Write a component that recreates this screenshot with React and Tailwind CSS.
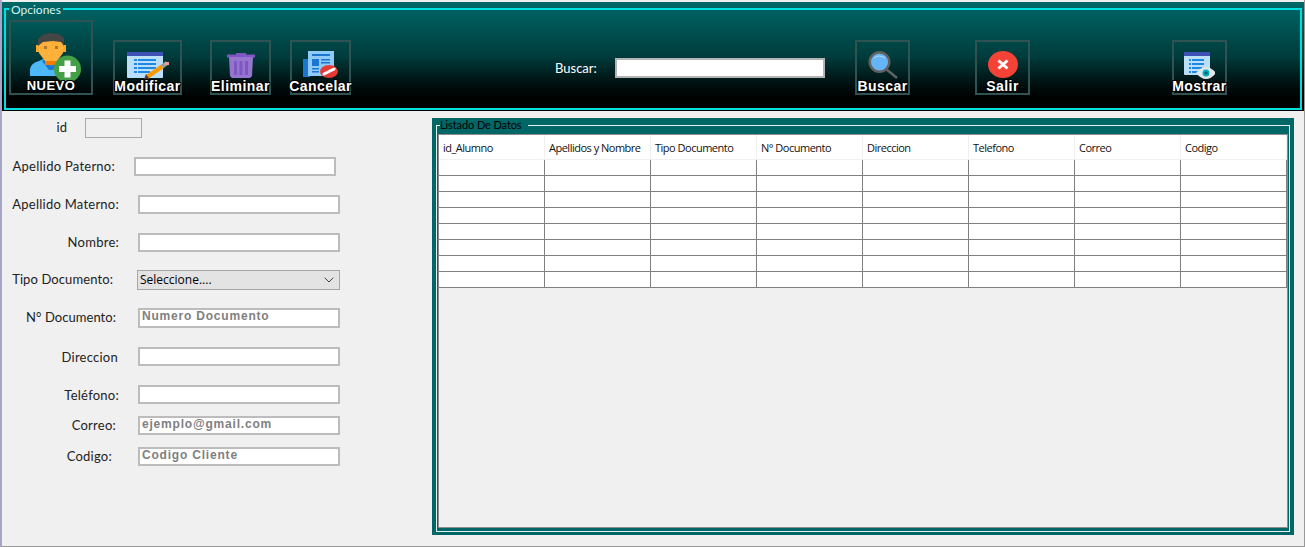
import { ChevronDown } from 'lucide-react';

const LABEL_FONT = 'font-["Lato",sans-serif]';
const BOLD_FONT = 'font-["Liberation_Sans",Arial,sans-serif]';

const columns = ['id_Alumno', 'Apellidos y Nombre', 'Tipo Documento', 'N° Documento', 'Direccion', 'Telefono', 'Correo', 'Codigo'];
const rows = [0, 1, 2, 3, 4, 5, 6, 7];

const fields = [
  { label: 'Apellido Paterno:', row: 'mt-[19px] h-[19px]', lw: 'w-[113px] tracking-[0.25px]', ml: 'ml-[19px]' },
  { label: 'Apellido Materno:', row: 'mt-[19px] h-[19px]', lw: 'w-[117px] tracking-[0.25px]', ml: 'ml-[19px]' },
  { label: 'Nombre:', row: 'mt-[19px] h-[19px]', lw: 'w-[117px] tracking-[0.25px]', ml: 'ml-[19px]' },
  { label: 'Tipo Documento:', row: 'mt-[18px] h-[20px]', lw: 'w-[111px] tracking-[0.1px]', ml: 'ml-[24px]', combo: true },
  { label: 'N° Documento:', row: 'mt-[18px] h-[20px]', lw: 'w-[114px] tracking-[0.05px]', ml: 'ml-[22px]', value: 'Numero Documento' },
  { label: 'Direccion', row: 'mt-[19px] h-[19px]', lw: 'w-[116px] pt-[3px] tracking-[0.25px]', ml: 'ml-[20px]' },
  { label: 'Teléfono:', row: 'mt-[19px] h-[19px]', lw: 'w-[117px] pt-[3px] tracking-[0.25px]', ml: 'ml-[19px]' },
  { label: 'Correo:', row: 'mt-[12px] h-[19px]', lw: 'w-[114px] tracking-[0.25px]', ml: 'ml-[22px]', value: 'ejemplo@gmail.com' },
  { label: 'Codigo:', row: 'mt-[12px] h-[19px]', lw: 'w-[110px] tracking-[0.25px]', ml: 'ml-[26px]', value: 'Codigo Cliente' },
];

//// Toolbar icons ////
function NuevoIcon() {
  return (
    <svg width="53" height="48" viewBox="0 0 53 48" className="mt-[11px] ml-[9px] -mb-[2px] shrink-0">
      <path d="M1 43 V36 Q2 30 10 28 L16 25 H28 L36 29 V43 Z" fill="#4db8f8" />
      <path d="M13 28 L16 25 L22 33 L28 25 L32 28 L24 37 H20 Z" fill="#1976d2" />
      <rect x="16" y="21" width="12" height="11" fill="#f57c00" />
      <rect x="7" y="12" width="4" height="7" fill="#ffa726" />
      <rect x="33" y="12" width="4" height="7" fill="#ffa726" />
      <path d="M10 6 H34 V20 L28 28 H16 L10 20 Z" fill="#ffb13b" />
      <path d="M9 13 V6 L13 2 L20 0 L30 1 L35 5 V13 L32 9 L24 8 L14 9 Z" fill="#454545" />
      <rect x="15" y="13" width="3" height="3" fill="#b5742a" />
      <rect x="26" y="13" width="3" height="3" fill="#b5742a" />
      <circle cx="38.5" cy="36" r="13.5" fill="#43a047" />
      <rect x="30" y="33" width="17" height="6" fill="#fff" />
      <rect x="35.5" y="27.5" width="6" height="17" fill="#fff" />
    </svg>
  );
}

function ModificarIcon() {
  return (
    <svg width="42" height="28" viewBox="0 0 42 28" className="mt-[9px] shrink-0">
      <rect x="0" y="1" width="36" height="26" rx="1" fill="#bbdefb" />
      <rect x="0" y="1" width="36" height="4" fill="#3f51b5" />
      <g fill="#1e88e5">
        <rect x="7" y="8" width="3" height="2" /><rect x="11" y="8" width="18" height="2" />
        <rect x="7" y="12" width="3" height="2" /><rect x="11" y="12" width="18" height="2" />
        <rect x="7" y="16" width="3" height="2" /><rect x="11" y="16" width="18" height="2" />
        <rect x="7" y="20" width="3" height="2" /><rect x="11" y="20" width="12" height="2" />
      </g>
      <path d="M20 26 L36 15" stroke="#ff9800" strokeWidth="4.5" />
      <path d="M35 15.5 L40 12" stroke="#9e9e9e" strokeWidth="4" />
      <rect x="38" y="11" width="4" height="3" fill="#ef9a9a" />
      <path d="M17 28 L19 23 L22 27 Z" fill="#5d4037" />
    </svg>
  );
}

function EliminarIcon() {
  return (
    <svg width="28" height="28" viewBox="0 0 28 28" className="mt-[9px] shrink-0">
      <rect x="9" y="2" width="10" height="2" fill="#7e57c2" />
      <rect x="0" y="3.5" width="28" height="3" fill="#7e57c2" />
      <path d="M2 6 H26 L25 25 L23 27 H5 L3 25 Z" fill="#9575cd" />
      <g fill="#7e57c2">
        <rect x="7" y="10" width="3" height="14" />
        <rect x="12.5" y="10" width="3" height="14" />
        <rect x="18" y="10" width="3" height="14" />
      </g>
    </svg>
  );
}

function CancelarIcon() {
  return (
    <svg width="35" height="28" viewBox="0 0 35 28" className="mt-[9px] shrink-0">
      <rect x="0" y="8" width="7" height="18" fill="#1976d2" />
      <rect x="5" y="0" width="26" height="25" fill="#90caf9" />
      <g fill="#1976d2">
        <rect x="9" y="3" width="18" height="2" />
        <rect x="9" y="8" width="7" height="7" />
        <rect x="18" y="8" width="9" height="1.5" /><rect x="18" y="11" width="9" height="1.5" />
        <rect x="9" y="17" width="7" height="1.5" /><rect x="9" y="20" width="7" height="1.5" />
      </g>
      <ellipse cx="26" cy="20.5" rx="9" ry="6.5" fill="#e53935" />
      <path d="M21 23 L31 18" stroke="#fff" strokeWidth="3" strokeLinecap="round" />
    </svg>
  );
}

function BuscarIcon() {
  return (
    <svg width="30" height="28" viewBox="0 0 30 28" className="mt-[9px] shrink-0">
      <path d="M18 18 L29 27" stroke="#5f6368" strokeWidth="2.5" />
      <circle cx="11.5" cy="11" r="9.8" fill="#64b5f6" stroke="#616161" strokeWidth="2.5" />
      <path d="M6 7 Q11 3 17 7" stroke="#bbdefb" strokeWidth="1" fill="none" />
    </svg>
  );
}

function SalirIcon() {
  return (
    <svg width="30" height="28" viewBox="0 0 30 28" className="mt-[9px] shrink-0">
      <ellipse cx="15" cy="13.5" rx="15" ry="13.5" fill="#f44336" />
      <path d="M10.5 9.5 L19.5 17.5 M19.5 9.5 L10.5 17.5" stroke="#fff" strokeWidth="3" />
    </svg>
  );
}

function MostrarIcon() {
  return (
    <svg width="31" height="28" viewBox="0 0 31 28" className="mt-[9px] shrink-0">
      <rect x="0" y="1" width="26" height="23" rx="1" fill="#bbdefb" />
      <rect x="0" y="1" width="26" height="4" fill="#3f51b5" />
      <g fill="#1e88e5">
        <rect x="5" y="8" width="2" height="2" /><rect x="8" y="8" width="12" height="2" />
        <rect x="5" y="12" width="2" height="2" /><rect x="8" y="12" width="12" height="2" />
        <rect x="5" y="16" width="2" height="2" /><rect x="8" y="16" width="10" height="2" />
        <rect x="5" y="20" width="2" height="2" /><rect x="8" y="20" width="6" height="2" />
      </g>
      <path d="M12 22 Q22 10 32 22 Q22 34 12 22 Z" fill="#dfe6e9" />
      <circle cx="22" cy="22" r="3.5" fill="#00acc1" />
      <circle cx="22" cy="22" r="1.5" fill="#006064" />
    </svg>
  );
}

function ToolButton({ label, box, text = 'text-[14px] tracking-[0.45px]', children }) {
  return (
    <button className={`${box} flex flex-col items-center shrink-0 border-2 border-[#2f5252]`}>
      {children}
      <span className={`${BOLD_FONT} ${text} whitespace-nowrap leading-[14px] font-bold text-white [text-shadow:1px_1px_0_#000,-1px_-1px_0_#000,1px_-1px_0_#000,-1px_1px_0_#000]`}>
        {label}
      </span>
    </button>
  );
}

function App() {
  return (
    <div className="w-[1305px] h-[547px] overflow-hidden bg-[#f0f0f0] border-l-2 border-l-[#a6a6c8] border-b border-b-[#999999] border-r border-r-[#999999] pt-[2px]">
      {/* Opciones */}
      <div className="w-[1302px] h-[109px] px-[2px] bg-linear-to-b from-[#006868] via-[#003c3c] to-black">
        <fieldset className="h-[108px] border-2 border-[#00dfdf]">
          <legend className={`${LABEL_FONT} h-[14px] ml-[3px] px-[2px] text-[12px] leading-[16px] text-[#d4f4f4]`}>Opciones</legend>
          <div className="flex items-end h-[79px] pl-[3px]">
            <ToolButton label="NUEVO" box="w-[84px] h-[75px]" text="text-[13px] tracking-[0.5px]"><NuevoIcon /></ToolButton>
            <ToolButton label="Modificar" box="w-[69px] h-[55px] ml-[20px]"><ModificarIcon /></ToolButton>
            <ToolButton label="Eliminar" box="w-[61px] h-[55px] ml-[28px]"><EliminarIcon /></ToolButton>
            <ToolButton label="Cancelar" box="w-[61px] h-[55px] ml-[19px]"><CancelarIcon /></ToolButton>
            <span className={`${LABEL_FONT} w-[43px] ml-[204px] mb-[19px] text-[13px] leading-[16px] text-white`}>Buscar:</span>
            <input className="w-[210px] h-[20px] ml-[17px] mb-[17px] bg-white border-2 border-[#b4b4b4]" />
            <ToolButton label="Buscar" box="w-[55px] h-[55px] ml-[30px]"><BuscarIcon /></ToolButton>
            <ToolButton label="Salir" box="w-[55px] h-[55px] ml-[65px]"><SalirIcon /></ToolButton>
            <ToolButton label="Mostrar" box="w-[55px] h-[55px] ml-[142px]"><MostrarIcon /></ToolButton>
          </div>
        </fieldset>
      </div>

      <div className="flex">
        {/* Formulario */}
        <div className="w-[430px] shrink-0">
          <div className="flex items-center mt-[7px] h-[20px]">
            <span className={`${LABEL_FONT} w-[65px] text-right text-[13px] text-[#222222]`}>id</span>
            <div className="w-[57px] h-[20px] ml-[18px] border border-[#ababab]"></div>
          </div>
          {fields.map((f) => (
            <div key={f.label} className={`flex items-center ${f.row}`}>
              <span className={`${LABEL_FONT} ${f.lw} text-right whitespace-nowrap text-[13px] text-[#222222]`}>{f.label}</span>
              {f.combo ? (
                <div className={`${f.ml} w-[203px] h-[20px] flex items-center justify-between pl-[2px] pr-[2px] bg-[#e3e3e3] border border-[#a6a6a6] font-["Open_Sans",sans-serif] text-[12px] text-black`}>
                  <span>Seleccione....</span>
                  <ChevronDown size={16} strokeWidth={1.4} className="shrink-0 text-[#333333]" />
                </div>
              ) : (
                <input
                  readOnly
                  value={f.value || ''}
                  className={`${f.ml} ${BOLD_FONT} w-[202px] h-full pl-[2px] pb-[4px] bg-white border-2 border-[#bcbcbc] text-[12px] font-bold tracking-[0.8px] text-[#808080]`}
                />
              )}
            </div>
          ))}
        </div>

        {/* Listado De Datos */}
        <div className="w-[862px] h-[417px] mt-[7px] px-[4px] bg-[#006666]">
          <fieldset className="h-[414px] border border-[#e6f0f0] px-[1px]">
            <legend className={`${LABEL_FONT} ml-[2px] pr-[6px] text-[11px] leading-[14px] tracking-[-0.1px] text-black`}>Listado De Datos</legend>
            <div className="w-[850px] h-[394px] mt-[2px] bg-[#f0f0f0] border border-[#8c8c8c]">
              <div className="flex h-[25px] bg-white border-b border-b-[#f0f0f0]">
                {columns.map((c) => (
                  <div key={c} className='w-[106px] pl-[4px] border-r border-r-[#f0f0f0] font-["Open_Sans",sans-serif] text-[11px] leading-[25px] tracking-[-0.5px] text-[#111111] whitespace-nowrap'>
                    {c}
                  </div>
                ))}
              </div>
              {rows.map((r) => (
                <div key={r} className="flex h-[16px] bg-white border-b border-b-[#808080]">
                  {columns.map((c) => (
                    <div key={c} className="w-[106px] border-r border-r-[#808080]"></div>
                  ))}
                </div>
              ))}
            </div>
          </fieldset>
        </div>
      </div>
    </div>
  );
}

export default App;
